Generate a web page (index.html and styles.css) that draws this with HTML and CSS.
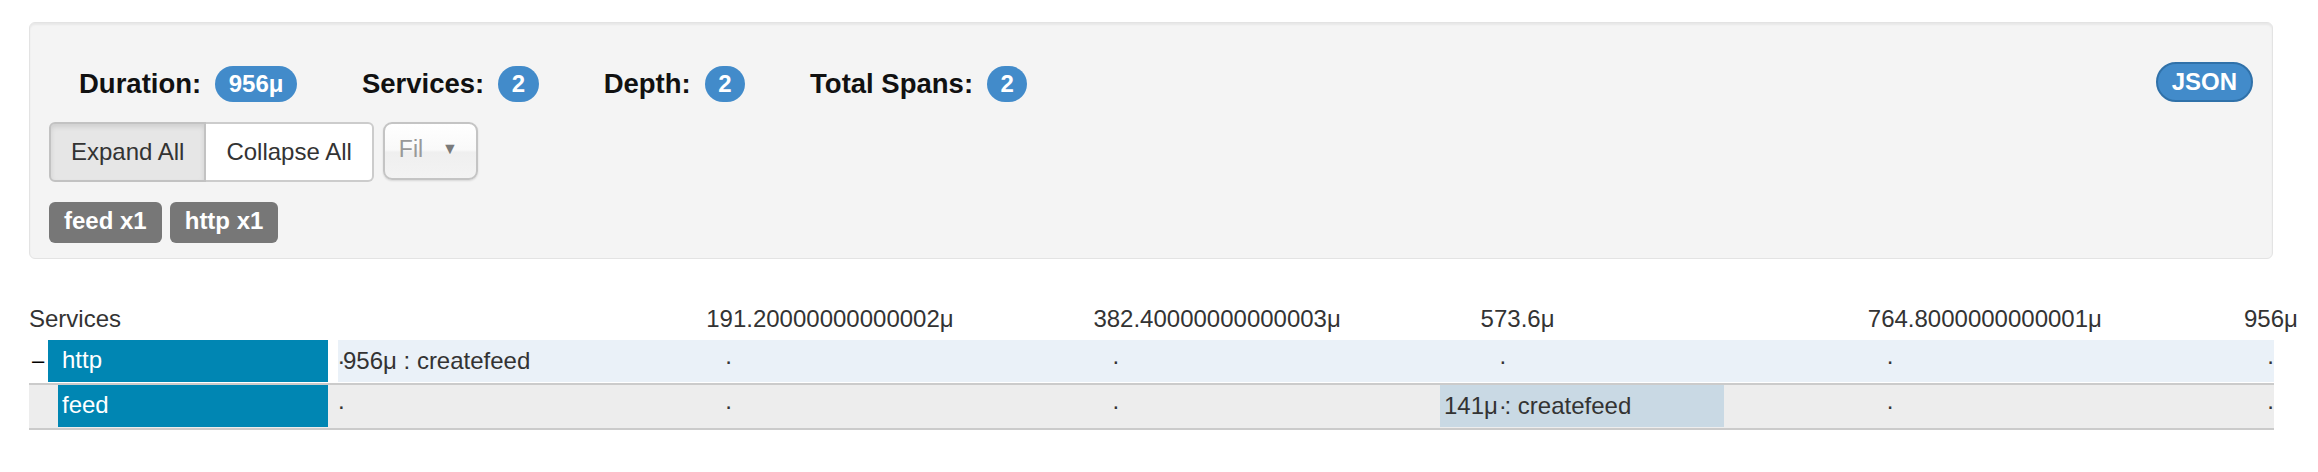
FILE: index.html
```html
<!DOCTYPE html>
<html>
<head>
<meta charset="utf-8">
<title>Trace</title>
<link rel="stylesheet" href="styles.css">
</head>
<body>
<div class="page">
  <div class="well">
    <div class="top-row">
      <ul class="stats">
        <li><span class="stat-label">Duration:</span><span class="badge">956μ</span></li>
        <li><span class="stat-label">Services:</span><span class="badge">2</span></li>
        <li><span class="stat-label">Depth:</span><span class="badge">2</span></li>
        <li><span class="stat-label">Total Spans:</span><span class="badge">2</span></li>
      </ul>
      <button class="json-btn">JSON</button>
    </div>
    <div class="controls">
      <div class="btn-group">
        <button class="btn active">Expand All</button>
        <button class="btn">Collapse All</button>
      </div>
      <div class="select"><span class="select-text">Fil</span><span class="caret">▼</span></div>
    </div>
    <div class="tags">
      <span class="tag">feed x1</span>
      <span class="tag">http x1</span>
    </div>
  </div>

  <div class="trace">
    <div class="trace-header">
      <div class="svc-head">Services</div>
      <div class="axis">
        <span class="axis-label" style="left: calc(20% - 19px)">191.20000000000002μ</span>
        <span class="axis-label" style="left: calc(40% - 19px)">382.40000000000003μ</span>
        <span class="axis-label" style="left: calc(60% - 19px)">573.6μ</span>
        <span class="axis-label" style="left: calc(80% - 19px)">764.8000000000001μ</span>
        <span class="axis-label" style="left: calc(100% - 30px)">956μ</span>
      </div>
    </div>

    <div class="span-row root">
      <div class="svc-col">
        <span class="toggle">–</span>
        <span class="svc-name">http</span>
      </div>
      <div class="bars">
        <div class="bar bar-root" style="left: 0%; width: 100%">956μ : createfeed</div>
        <span class="tick" style="left: 0%">.</span>
        <span class="tick" style="left: 20%">.</span>
        <span class="tick" style="left: 40%">.</span>
        <span class="tick" style="left: 60%">.</span>
        <span class="tick" style="left: 80%">.</span>
        <span class="tick tick-end">.</span>
      </div>
    </div>

    <div class="span-row child">
      <div class="svc-col">
        <span class="svc-name">feed</span>
      </div>
      <div class="bars">
        <div class="bar bar-child" style="left: 56.92%; width: 14.67%">141μ : createfeed</div>
        <span class="tick" style="left: 0%">.</span>
        <span class="tick" style="left: 20%">.</span>
        <span class="tick" style="left: 40%">.</span>
        <span class="tick" style="left: 60%">.</span>
        <span class="tick" style="left: 80%">.</span>
        <span class="tick tick-end">.</span>
      </div>
    </div>
  </div>
</div>
</body>
</html>
```

FILE: styles.css
```css
* { box-sizing: border-box; }

html, body {
  margin: 0;
  padding: 0;
  background: #fff;
}

body {
  font-family: "Liberation Sans", Arial, Helvetica, sans-serif;
  color: #333;
  font-size: 24px;
}

.page {
  padding: 22px 0 0 29px;
  width: 2274px;
}

/* ---------- summary well ---------- */
.well {
  width: 2244px;
  background: #f4f4f4;
  border: 1px solid #e3e3e3;
  border-radius: 6px;
  box-shadow: inset 0 2px 2px rgba(0, 0, 0, 0.05);
  padding: 39px 19px 15px 19px;
}

.top-row {
  display: flex;
  justify-content: space-between;
  align-items: flex-end;
}

.stats {
  list-style: none;
  margin: 0;
  padding: 0 0 0 30px;
  display: flex;
  align-items: center;
  height: 36px;
}

.stats li {
  display: flex;
  align-items: center;
  gap: 14px;
  margin-right: 65px;
}

.stat-label {
  font-weight: bold;
  font-size: 27.5px;
  color: #111;
}

.badge {
  display: inline-block;
  background: #428bca;
  color: #fff;
  font-weight: bold;
  font-size: 24px;
  line-height: 24px;
  padding: 6px 13.5px;
  border-radius: 18px;
}

.json-btn {
  font-family: inherit;
  font-weight: bold;
  font-size: 24px;
  line-height: 24px;
  color: #fff;
  background: #428bca;
  border: 2px solid #3071a9;
  border-radius: 20px;
  height: 40px;
  padding: 0 14px;
}

.controls {
  display: flex;
  align-items: flex-start;
  margin-top: 20px;
}

.btn-group {
  display: flex;
}

.btn {
  font-family: inherit;
  font-size: 24px;
  color: #333;
  background: #fff;
  border: 2px solid #ccc;
  height: 60px;
  padding: 0 20px;
  line-height: 56px;
}

.btn:first-child {
  border-radius: 6px 0 0 6px;
}

.btn:last-child {
  border-left: none;
  border-radius: 0 6px 6px 0;
}

.btn.active {
  background: #e6e6e6;
  border-color: #c2c2c2;
  box-shadow: inset 0 3px 5px rgba(0, 0, 0, 0.1);
}

.select {
  margin-left: 9px;
  width: 95px;
  height: 58px;
  border: 2px solid #c4c4c4;
  border-radius: 9px;
  background: linear-gradient(#ffffff 0%, #f9f9f9 48%, #efefef 52%, #f3f3f3 100%);
  box-shadow: 0 1px 2px rgba(0, 0, 0, 0.12);
  display: flex;
  align-items: flex-start;
  padding: 10px 0 0 14px;
}

.select-text {
  color: #999;
  font-size: 23px;
  line-height: 30px;
}

.caret {
  color: #7a7a7a;
  font-size: 16px;
  line-height: 30px;
  margin-left: 19px;
}

.tags {
  display: flex;
  gap: 8px;
  margin-top: 20px;
}

.tag {
  background: #777;
  color: #fff;
  font-weight: bold;
  font-size: 24px;
  line-height: 24px;
  padding: 7px 15px 10px;
  border-radius: 6px;
}

/* ---------- trace timeline ---------- */
.trace {
  margin-top: 46px;
  width: 2245px;
}

.trace-header {
  display: flex;
  height: 28px;
  line-height: 28px;
  margin-bottom: 7px;
  color: #333;
}

.svc-head {
  width: 309px;
  flex: none;
}

.axis {
  flex: 1;
  position: relative;
}

.axis-label {
  position: absolute;
  top: 0;
  white-space: nowrap;
}

.span-row {
  display: flex;
  height: 45px;
  padding-bottom: 1px;
  border-bottom: 2px solid #cbcbcb;
}

.span-row.child {
  background: #ededed;
}

.svc-col {
  width: 309px;
  flex: none;
  display: flex;
  padding-right: 10px;
}

.span-row.child .svc-col {
  padding-left: 29px;
}

.toggle {
  width: 19px;
  flex: none;
  color: #000;
  line-height: 42px;
  padding-left: 3px;
  font-size: 22px;
}

.svc-name {
  flex: 1;
  background: #0086b3;
  color: #fff;
  height: 42px;
  line-height: 40px;
  padding-left: 14px;
}

.span-row.child .svc-name {
  padding-left: 4px;
}

.bars {
  flex: 1;
  position: relative;
  height: 42px;
}

.bar {
  position: absolute;
  top: 0;
  height: 42px;
  line-height: 42px;
  padding-left: 5px;
  color: #333;
  white-space: nowrap;
}

.bar-root {
  background: #eaf1f8;
}

.bar-child {
  background: #c9d9e4;
  padding-left: 4px;
}

.tick {
  position: absolute;
  top: 0;
  line-height: 32px;
  color: #333;
}

.tick-end {
  left: 100%;
  transform: translateX(-100%);
}
```
